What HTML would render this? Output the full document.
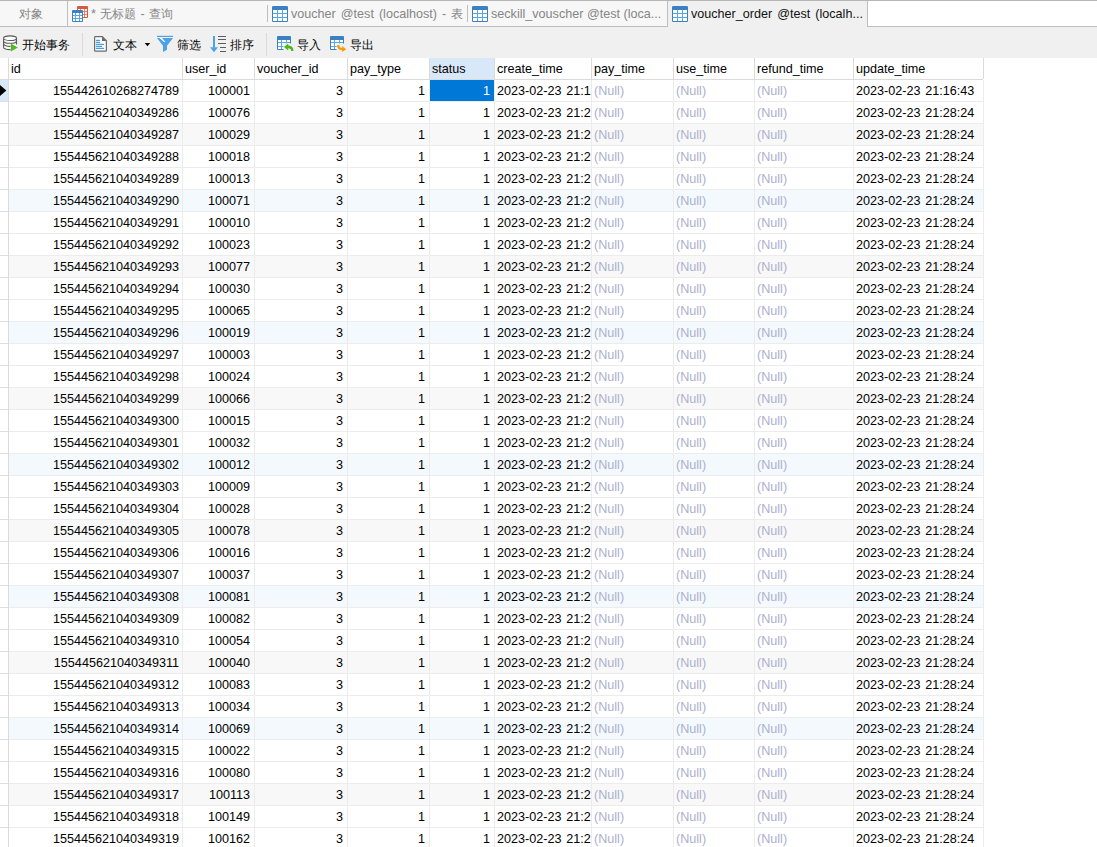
<!DOCTYPE html><html><head><meta charset="utf-8"><title>voucher_order</title><style>
html,body{margin:0;padding:0}
body{width:1097px;height:847px;overflow:hidden;position:relative;background:#fff;font-family:"Liberation Sans",sans-serif;font-size:12.6px;color:#000}
div,span,svg{position:absolute;box-sizing:border-box}
.t{white-space:nowrap;overflow:hidden;line-height:21px;height:21px;padding-top:1px}
.r{text-align:right}
.n{color:#abb0cd}
.tab{top:1px;height:25px;background:#f7f7f7;line-height:25px;white-space:nowrap;overflow:hidden}
.tt{color:#858585}
.tb{color:#111}
.tbi{top:34px;line-height:22px;white-space:nowrap;color:#000;font-size:12px}
</style></head><body>
<div style="left:0;top:0;width:1097px;height:1px;background:#b6b6b6"></div>
<div style="left:0;top:1px;width:667px;height:25px;background:#f7f7f7"></div>
<div style="left:0;top:26px;width:667px;height:1px;background:#bdbdbd"></div>
<div style="left:67px;top:1px;width:1px;height:26px;background:#bdbdbd"></div>
<div style="left:267px;top:5px;width:1px;height:17px;background:#bdbdbd"></div>
<div style="left:467px;top:5px;width:1px;height:17px;background:#bdbdbd"></div>
<div style="left:667px;top:1px;width:1px;height:26px;background:#bdbdbd"></div>
<div style="left:668px;top:1px;width:199px;height:26px;background:#f0f0f0"></div>
<div style="left:867px;top:1px;width:1px;height:26px;background:#bdbdbd"></div>
<div style="left:868px;top:1px;width:229px;height:25px;background:#fff"></div>
<div style="left:867px;top:26px;width:230px;height:1px;background:#bdbdbd"></div>
<div class="tab tt" style="left:19px;top:2px;width:45px;background:none;font-size:12px">对象</div>
<svg style="left:77px;top:6px" width="11" height="12" viewBox="0 0 11 12" shape-rendering="crispEdges"><rect x="0" y="0" width="11" height="12" rx="1" fill="#d65a3c" shape-rendering="auto"/><rect x="1" y="3" width="9" height="8" fill="#ef7b5c"/><rect x="1" y="3" width="2" height="2" fill="#fff"/><rect x="4" y="3" width="3" height="2" fill="#fff"/><rect x="8" y="3" width="2" height="2" fill="#fff"/><rect x="1" y="6" width="2" height="2" fill="#fff"/><rect x="4" y="6" width="3" height="2" fill="#fff"/><rect x="8" y="6" width="2" height="2" fill="#fff"/><rect x="1" y="9" width="2" height="2" fill="#fff"/><rect x="4" y="9" width="3" height="2" fill="#fff"/><rect x="8" y="9" width="2" height="2" fill="#fff"/></svg>
<svg style="left:72px;top:10px" width="11" height="12" viewBox="0 0 11 12" shape-rendering="crispEdges"><rect x="0" y="0" width="11" height="12" rx="1" fill="#3b80c2" shape-rendering="auto"/><rect x="1" y="3" width="9" height="8" fill="#5aa7e3"/><rect x="1" y="3" width="2" height="2" fill="#fff"/><rect x="4" y="3" width="3" height="2" fill="#fff"/><rect x="8" y="3" width="2" height="2" fill="#fff"/><rect x="1" y="6" width="2" height="2" fill="#fff"/><rect x="4" y="6" width="3" height="2" fill="#fff"/><rect x="8" y="6" width="2" height="2" fill="#fff"/><rect x="1" y="9" width="2" height="2" fill="#fff"/><rect x="4" y="9" width="3" height="2" fill="#fff"/><rect x="8" y="9" width="2" height="2" fill="#fff"/></svg>
<div class="tab tt" style="left:91px;top:2px;width:174px;background:none;word-spacing:0.8px">* <span style="position:static;font-size:12px">无标题</span> - <span style="position:static;font-size:12px">查询</span></div>
<svg style="left:272px;top:6px" width="16" height="16" viewBox="0 0 16 16" shape-rendering="crispEdges"><rect x="0" y="0" width="16" height="16" rx="1.2" fill="#3b80c2" shape-rendering="auto"/><rect x="1" y="4" width="14" height="11" fill="#5aa7e3"/><rect x="1" y="4" width="4" height="3" fill="#fff"/><rect x="6" y="4" width="4" height="3" fill="#fff"/><rect x="11" y="4" width="4" height="3" fill="#fff"/><rect x="1" y="8" width="4" height="3" fill="#fff"/><rect x="6" y="8" width="4" height="3" fill="#fff"/><rect x="11" y="8" width="4" height="3" fill="#fff"/><rect x="1" y="12" width="4" height="3" fill="#fff"/><rect x="6" y="12" width="4" height="3" fill="#fff"/><rect x="11" y="12" width="4" height="3" fill="#fff"/></svg>
<div class="tab tt" style="left:291px;top:2px;width:175px;background:none;word-spacing:1.5px">voucher @test (localhost) - <span style="position:static;font-size:12px">表</span></div>
<svg style="left:472px;top:6px" width="16" height="16" viewBox="0 0 16 16" shape-rendering="crispEdges"><rect x="0" y="0" width="16" height="16" rx="1.2" fill="#3b80c2" shape-rendering="auto"/><rect x="1" y="4" width="14" height="11" fill="#5aa7e3"/><rect x="1" y="4" width="4" height="3" fill="#fff"/><rect x="6" y="4" width="4" height="3" fill="#fff"/><rect x="11" y="4" width="4" height="3" fill="#fff"/><rect x="1" y="8" width="4" height="3" fill="#fff"/><rect x="6" y="8" width="4" height="3" fill="#fff"/><rect x="11" y="8" width="4" height="3" fill="#fff"/><rect x="1" y="12" width="4" height="3" fill="#fff"/><rect x="6" y="12" width="4" height="3" fill="#fff"/><rect x="11" y="12" width="4" height="3" fill="#fff"/></svg>
<div class="tab tt" style="left:491px;top:2px;width:175px;background:none">seckill_vouscher @test (loca...</div>
<svg style="left:672px;top:6px" width="16" height="16" viewBox="0 0 16 16" shape-rendering="crispEdges"><rect x="0" y="0" width="16" height="16" rx="1.2" fill="#3b80c2" shape-rendering="auto"/><rect x="1" y="4" width="14" height="11" fill="#5aa7e3"/><rect x="1" y="4" width="4" height="3" fill="#fff"/><rect x="6" y="4" width="4" height="3" fill="#fff"/><rect x="11" y="4" width="4" height="3" fill="#fff"/><rect x="1" y="8" width="4" height="3" fill="#fff"/><rect x="6" y="8" width="4" height="3" fill="#fff"/><rect x="11" y="8" width="4" height="3" fill="#fff"/><rect x="1" y="12" width="4" height="3" fill="#fff"/><rect x="6" y="12" width="4" height="3" fill="#fff"/><rect x="11" y="12" width="4" height="3" fill="#fff"/></svg>
<div class="tab tb" style="left:691px;top:2px;width:175px;background:none;word-spacing:1.5px">voucher_order @test (localh...</div>
<div style="left:0;top:27px;width:1097px;height:31px;background:#f0f0f0"></div>
<svg style="left:0;top:0" width="400" height="58" viewBox="0 0 400 58"><path d="M3.6 38.2 V47.4 A6.45 2.2 0 0 0 16.5 47.4 V38.2 Z" fill="#fff"/><g fill="none" stroke="#5a5a5a" stroke-width="1.1"><path d="M3.6 38.2 V47.4 A6.45 2.2 0 0 0 10.5 49.6 M16.5 38.2 V44.5" /><ellipse cx="10.05" cy="38.2" rx="6.45" ry="2.3" fill="#fff"/><path d="M3.6 41 A6.45 2.3 0 0 0 16.5 41 M3.6 44.1 A6.45 2.3 0 0 0 10.5 46.4"/></g><path d="M4.2 40.8 A6 2 0 0 0 16 40.8 V44 L11 44 V49.5 L4.2 47 Z" fill="#fff" fill-opacity="0"/><path d="M10.8 43.4 L17.8 47.5 L10.8 51.6 Z" fill="#50b91e"/><path d="M94.6 37.2 Q94.6 36.6 95.2 36.6 H102.3 L106.4 40.7 V50.6 Q106.4 51.2 105.8 51.2 H95.2 Q94.6 51.2 94.6 50.6 Z" fill="#fff" stroke="#6b6b6b" stroke-width="1.2"/><path d="M102 36.4 V41 H106.6 Z" fill="#6b6b6b"/><g stroke="#4a9de0" stroke-width="1.1" stroke-linecap="round"><path d="M96.4 40.4H99.6M96.4 42.4H99.6M96.4 44.4H103.6M96.4 46.4H101.6M96.4 48.4H103.6"/></g><path d="M144.7 43 H150.2 L147.45 46.2 Z" fill="#000"/><rect x="157" y="35.8" width="16" height="1.2" fill="#4ea1e3"/><path d="M157 38 H173 L167 45.8 V49.7 L163 52 V45.8 Z" fill="#4ea1e3"/><path d="M159.4 38 H162 L165.4 42 H164 Z" fill="#fff"/><rect x="213" y="36" width="2" height="11.5" fill="#4ea1e3"/><path d="M210 47.3 H218 L214 52.2 Z" fill="#4ea1e3"/><g fill="#5c5c5c"><rect x="218" y="36" width="8" height="1"/><rect x="218" y="39" width="8" height="1"/><rect x="218" y="43" width="8" height="1"/><rect x="220" y="47" width="6" height="1"/><rect x="220" y="51" width="6" height="1"/></g></svg>
<div class="tbi" style="left:22px">开始事务</div>
<div style="left:82px;top:33px;width:1px;height:23px;background:#dadada"></div>
<div class="tbi" style="left:113px">文本</div>
<div class="tbi" style="left:177px">筛选</div>
<div class="tbi" style="left:230px">排序</div>
<div style="left:266px;top:33px;width:1px;height:23px;background:#dadada"></div>
<svg style="left:277px;top:36px" width="14" height="14" viewBox="0 0 14 14" shape-rendering="crispEdges"><rect x="0" y="0" width="14" height="14" rx="1" fill="#3b80c2" shape-rendering="auto"/><rect x="1" y="4" width="12" height="9" fill="#5aa7e3"/><rect x="1" y="4" width="3" height="2" fill="#fff"/><rect x="5" y="4" width="4" height="2" fill="#fff"/><rect x="10" y="4" width="3" height="2" fill="#fff"/><rect x="1" y="7" width="3" height="3" fill="#fff"/><rect x="5" y="7" width="4" height="3" fill="#fff"/><rect x="10" y="7" width="3" height="3" fill="#fff"/><rect x="1" y="11" width="3" height="2" fill="#fff"/><rect x="5" y="11" width="4" height="2" fill="#fff"/><rect x="10" y="11" width="3" height="2" fill="#fff"/></svg>
<svg style="left:330px;top:36px" width="14" height="14" viewBox="0 0 14 14" shape-rendering="crispEdges"><rect x="0" y="0" width="14" height="14" rx="1" fill="#3b80c2" shape-rendering="auto"/><rect x="1" y="4" width="12" height="9" fill="#5aa7e3"/><rect x="1" y="4" width="3" height="2" fill="#fff"/><rect x="5" y="4" width="4" height="2" fill="#fff"/><rect x="10" y="4" width="3" height="2" fill="#fff"/><rect x="1" y="7" width="3" height="3" fill="#fff"/><rect x="5" y="7" width="4" height="3" fill="#fff"/><rect x="10" y="7" width="3" height="3" fill="#fff"/><rect x="1" y="11" width="3" height="2" fill="#fff"/><rect x="5" y="11" width="4" height="2" fill="#fff"/><rect x="10" y="11" width="3" height="2" fill="#fff"/></svg>
<svg style="left:270px;top:30px" width="90" height="26" viewBox="270 30 90 26"><path d="M283.5 43.5 H292 V51.5 H283.5 Z M336.5 43.5 H347 V52.5 H336.5 Z" fill="#f0f0f0"/><path d="M284 47 L288.2 43.6 V45.6 C291.5 45.6 293.6 47.8 293.4 51 L291.2 51 C291.2 49.2 290 48.2 288.2 48.2 V50.4 Z" fill="#4cb81c"/><path d="M337 45 H339.3 C339.3 47 340.5 48 342.2 48 V46 L346.2 49.2 L342.2 52 V50.2 C339 50.2 337 48.3 337 45 Z" fill="#ff9a00"/></svg>
<div class="tbi" style="left:297px">导入</div>
<div class="tbi" style="left:350px">导出</div>
<div style="left:9px;top:124px;width:974px;height:21px;background:#f8f8f8"></div>
<div style="left:9px;top:190px;width:974px;height:21px;background:#f4f9fe"></div>
<div style="left:9px;top:256px;width:974px;height:21px;background:#f8f8f8"></div>
<div style="left:9px;top:322px;width:974px;height:21px;background:#f4f9fe"></div>
<div style="left:9px;top:388px;width:974px;height:21px;background:#f8f8f8"></div>
<div style="left:9px;top:454px;width:974px;height:21px;background:#f4f9fe"></div>
<div style="left:9px;top:520px;width:974px;height:21px;background:#f8f8f8"></div>
<div style="left:9px;top:586px;width:974px;height:21px;background:#f4f9fe"></div>
<div style="left:9px;top:652px;width:974px;height:21px;background:#f8f8f8"></div>
<div style="left:9px;top:718px;width:974px;height:21px;background:#f4f9fe"></div>
<div style="left:9px;top:784px;width:974px;height:21px;background:#f8f8f8"></div>
<div style="left:430px;top:58px;width:64px;height:21px;background:#d9e8f8"></div>
<div style="left:0;top:80px;width:8px;height:21px;background:#d9e8f8"></div>
<div style="left:430px;top:80px;width:64px;height:21px;background:#0078d7"></div>
<div style="left:0;top:79px;width:983px;height:1px;background:#dadada"></div>
<div style="left:0;top:101px;width:8px;height:1px;background:#dedede"></div>
<div style="left:9px;top:101px;width:974px;height:1px;background:#ececec"></div>
<div style="left:0;top:123px;width:8px;height:1px;background:#dedede"></div>
<div style="left:9px;top:123px;width:974px;height:1px;background:#ececec"></div>
<div style="left:0;top:145px;width:8px;height:1px;background:#dedede"></div>
<div style="left:9px;top:145px;width:974px;height:1px;background:#ececec"></div>
<div style="left:0;top:167px;width:8px;height:1px;background:#dedede"></div>
<div style="left:9px;top:167px;width:974px;height:1px;background:#ececec"></div>
<div style="left:0;top:189px;width:8px;height:1px;background:#dedede"></div>
<div style="left:9px;top:189px;width:974px;height:1px;background:#ececec"></div>
<div style="left:0;top:211px;width:8px;height:1px;background:#dedede"></div>
<div style="left:9px;top:211px;width:974px;height:1px;background:#ececec"></div>
<div style="left:0;top:233px;width:8px;height:1px;background:#dedede"></div>
<div style="left:9px;top:233px;width:974px;height:1px;background:#ececec"></div>
<div style="left:0;top:255px;width:8px;height:1px;background:#dedede"></div>
<div style="left:9px;top:255px;width:974px;height:1px;background:#ececec"></div>
<div style="left:0;top:277px;width:8px;height:1px;background:#dedede"></div>
<div style="left:9px;top:277px;width:974px;height:1px;background:#ececec"></div>
<div style="left:0;top:299px;width:8px;height:1px;background:#dedede"></div>
<div style="left:9px;top:299px;width:974px;height:1px;background:#ececec"></div>
<div style="left:0;top:321px;width:8px;height:1px;background:#dedede"></div>
<div style="left:9px;top:321px;width:974px;height:1px;background:#ececec"></div>
<div style="left:0;top:343px;width:8px;height:1px;background:#dedede"></div>
<div style="left:9px;top:343px;width:974px;height:1px;background:#ececec"></div>
<div style="left:0;top:365px;width:8px;height:1px;background:#dedede"></div>
<div style="left:9px;top:365px;width:974px;height:1px;background:#ececec"></div>
<div style="left:0;top:387px;width:8px;height:1px;background:#dedede"></div>
<div style="left:9px;top:387px;width:974px;height:1px;background:#ececec"></div>
<div style="left:0;top:409px;width:8px;height:1px;background:#dedede"></div>
<div style="left:9px;top:409px;width:974px;height:1px;background:#ececec"></div>
<div style="left:0;top:431px;width:8px;height:1px;background:#dedede"></div>
<div style="left:9px;top:431px;width:974px;height:1px;background:#ececec"></div>
<div style="left:0;top:453px;width:8px;height:1px;background:#dedede"></div>
<div style="left:9px;top:453px;width:974px;height:1px;background:#ececec"></div>
<div style="left:0;top:475px;width:8px;height:1px;background:#dedede"></div>
<div style="left:9px;top:475px;width:974px;height:1px;background:#ececec"></div>
<div style="left:0;top:497px;width:8px;height:1px;background:#dedede"></div>
<div style="left:9px;top:497px;width:974px;height:1px;background:#ececec"></div>
<div style="left:0;top:519px;width:8px;height:1px;background:#dedede"></div>
<div style="left:9px;top:519px;width:974px;height:1px;background:#ececec"></div>
<div style="left:0;top:541px;width:8px;height:1px;background:#dedede"></div>
<div style="left:9px;top:541px;width:974px;height:1px;background:#ececec"></div>
<div style="left:0;top:563px;width:8px;height:1px;background:#dedede"></div>
<div style="left:9px;top:563px;width:974px;height:1px;background:#ececec"></div>
<div style="left:0;top:585px;width:8px;height:1px;background:#dedede"></div>
<div style="left:9px;top:585px;width:974px;height:1px;background:#ececec"></div>
<div style="left:0;top:607px;width:8px;height:1px;background:#dedede"></div>
<div style="left:9px;top:607px;width:974px;height:1px;background:#ececec"></div>
<div style="left:0;top:629px;width:8px;height:1px;background:#dedede"></div>
<div style="left:9px;top:629px;width:974px;height:1px;background:#ececec"></div>
<div style="left:0;top:651px;width:8px;height:1px;background:#dedede"></div>
<div style="left:9px;top:651px;width:974px;height:1px;background:#ececec"></div>
<div style="left:0;top:673px;width:8px;height:1px;background:#dedede"></div>
<div style="left:9px;top:673px;width:974px;height:1px;background:#ececec"></div>
<div style="left:0;top:695px;width:8px;height:1px;background:#dedede"></div>
<div style="left:9px;top:695px;width:974px;height:1px;background:#ececec"></div>
<div style="left:0;top:717px;width:8px;height:1px;background:#dedede"></div>
<div style="left:9px;top:717px;width:974px;height:1px;background:#ececec"></div>
<div style="left:0;top:739px;width:8px;height:1px;background:#dedede"></div>
<div style="left:9px;top:739px;width:974px;height:1px;background:#ececec"></div>
<div style="left:0;top:761px;width:8px;height:1px;background:#dedede"></div>
<div style="left:9px;top:761px;width:974px;height:1px;background:#ececec"></div>
<div style="left:0;top:783px;width:8px;height:1px;background:#dedede"></div>
<div style="left:9px;top:783px;width:974px;height:1px;background:#ececec"></div>
<div style="left:0;top:805px;width:8px;height:1px;background:#dedede"></div>
<div style="left:9px;top:805px;width:974px;height:1px;background:#ececec"></div>
<div style="left:0;top:827px;width:8px;height:1px;background:#dedede"></div>
<div style="left:9px;top:827px;width:974px;height:1px;background:#ececec"></div>
<div style="left:0;top:849px;width:8px;height:1px;background:#dedede"></div>
<div style="left:9px;top:849px;width:974px;height:1px;background:#ececec"></div>
<div style="left:8px;top:58px;width:1px;height:21px;background:#dadada"></div>
<div style="left:8px;top:80px;width:1px;height:767px;background:#dadada"></div>
<div style="left:182px;top:58px;width:1px;height:21px;background:#dadada"></div>
<div style="left:182px;top:80px;width:1px;height:767px;background:#ececec"></div>
<div style="left:254px;top:58px;width:1px;height:21px;background:#dadada"></div>
<div style="left:254px;top:80px;width:1px;height:767px;background:#ececec"></div>
<div style="left:347px;top:58px;width:1px;height:21px;background:#dadada"></div>
<div style="left:347px;top:80px;width:1px;height:767px;background:#ececec"></div>
<div style="left:429px;top:58px;width:1px;height:21px;background:#dadada"></div>
<div style="left:429px;top:80px;width:1px;height:767px;background:#ececec"></div>
<div style="left:494px;top:58px;width:1px;height:21px;background:#dadada"></div>
<div style="left:494px;top:80px;width:1px;height:767px;background:#ececec"></div>
<div style="left:591px;top:58px;width:1px;height:21px;background:#dadada"></div>
<div style="left:591px;top:80px;width:1px;height:767px;background:#ececec"></div>
<div style="left:673px;top:58px;width:1px;height:21px;background:#dadada"></div>
<div style="left:673px;top:80px;width:1px;height:767px;background:#ececec"></div>
<div style="left:754px;top:58px;width:1px;height:21px;background:#dadada"></div>
<div style="left:754px;top:80px;width:1px;height:767px;background:#ececec"></div>
<div style="left:853px;top:58px;width:1px;height:21px;background:#dadada"></div>
<div style="left:853px;top:80px;width:1px;height:767px;background:#ececec"></div>
<div style="left:983px;top:58px;width:1px;height:21px;background:#dadada"></div>
<div style="left:983px;top:80px;width:1px;height:767px;background:#ececec"></div>
<svg style="left:0;top:83px" width="8" height="15" viewBox="0 0 8 15"><path d="M-1 1 L6.3 7.5 L-1 14 Z" fill="#000"/></svg>
<div class="t" style="left:9px;top:58px;width:173px;padding-left:2px">id</div>
<div class="t" style="left:183px;top:58px;width:71px;padding-left:2px">user_id</div>
<div class="t" style="left:255px;top:58px;width:92px;padding-left:2px">voucher_id</div>
<div class="t" style="left:348px;top:58px;width:81px;padding-left:2px">pay_type</div>
<div class="t" style="left:430px;top:58px;width:64px;padding-left:2px">status</div>
<div class="t" style="left:495px;top:58px;width:96px;padding-left:2px">create_time</div>
<div class="t" style="left:592px;top:58px;width:81px;padding-left:2px">pay_time</div>
<div class="t" style="left:674px;top:58px;width:80px;padding-left:2px">use_time</div>
<div class="t" style="left:755px;top:58px;width:98px;padding-left:2px">refund_time</div>
<div class="t" style="left:854px;top:58px;width:129px;padding-left:2px">update_time</div>
<div class="t r" style="left:9px;top:80px;width:173px;padding-right:3px;">155442610268274789</div>
<div class="t r" style="left:183px;top:80px;width:71px;padding-right:4px;">100001</div>
<div class="t r" style="left:255px;top:80px;width:92px;padding-right:4px;">3</div>
<div class="t r" style="left:348px;top:80px;width:81px;padding-right:4px;">1</div>
<div class="t r" style="left:430px;top:80px;width:64px;padding-right:4px;color:#fff;">1</div>
<div class="t" style="left:495px;top:80px;width:96px;padding-left:2px;word-spacing:1.3px;">2023-02-23 21:1</div>
<div class="t n" style="left:592px;top:80px;width:81px;padding-left:2px;word-spacing:1.3px;">(Null)</div>
<div class="t n" style="left:674px;top:80px;width:80px;padding-left:2px;word-spacing:1.3px;">(Null)</div>
<div class="t n" style="left:755px;top:80px;width:98px;padding-left:2px;word-spacing:1.3px;">(Null)</div>
<div class="t" style="left:854px;top:80px;width:129px;padding-left:2px;word-spacing:1.3px;">2023-02-23 21:16:43</div>
<div class="t r" style="left:9px;top:102px;width:173px;padding-right:3px;">155445621040349286</div>
<div class="t r" style="left:183px;top:102px;width:71px;padding-right:4px;">100076</div>
<div class="t r" style="left:255px;top:102px;width:92px;padding-right:4px;">3</div>
<div class="t r" style="left:348px;top:102px;width:81px;padding-right:4px;">1</div>
<div class="t r" style="left:430px;top:102px;width:64px;padding-right:4px;">1</div>
<div class="t" style="left:495px;top:102px;width:96px;padding-left:2px;word-spacing:1.3px;">2023-02-23 21:2</div>
<div class="t n" style="left:592px;top:102px;width:81px;padding-left:2px;word-spacing:1.3px;">(Null)</div>
<div class="t n" style="left:674px;top:102px;width:80px;padding-left:2px;word-spacing:1.3px;">(Null)</div>
<div class="t n" style="left:755px;top:102px;width:98px;padding-left:2px;word-spacing:1.3px;">(Null)</div>
<div class="t" style="left:854px;top:102px;width:129px;padding-left:2px;word-spacing:1.3px;">2023-02-23 21:28:24</div>
<div class="t r" style="left:9px;top:124px;width:173px;padding-right:3px;">155445621040349287</div>
<div class="t r" style="left:183px;top:124px;width:71px;padding-right:4px;">100029</div>
<div class="t r" style="left:255px;top:124px;width:92px;padding-right:4px;">3</div>
<div class="t r" style="left:348px;top:124px;width:81px;padding-right:4px;">1</div>
<div class="t r" style="left:430px;top:124px;width:64px;padding-right:4px;">1</div>
<div class="t" style="left:495px;top:124px;width:96px;padding-left:2px;word-spacing:1.3px;">2023-02-23 21:2</div>
<div class="t n" style="left:592px;top:124px;width:81px;padding-left:2px;word-spacing:1.3px;">(Null)</div>
<div class="t n" style="left:674px;top:124px;width:80px;padding-left:2px;word-spacing:1.3px;">(Null)</div>
<div class="t n" style="left:755px;top:124px;width:98px;padding-left:2px;word-spacing:1.3px;">(Null)</div>
<div class="t" style="left:854px;top:124px;width:129px;padding-left:2px;word-spacing:1.3px;">2023-02-23 21:28:24</div>
<div class="t r" style="left:9px;top:146px;width:173px;padding-right:3px;">155445621040349288</div>
<div class="t r" style="left:183px;top:146px;width:71px;padding-right:4px;">100018</div>
<div class="t r" style="left:255px;top:146px;width:92px;padding-right:4px;">3</div>
<div class="t r" style="left:348px;top:146px;width:81px;padding-right:4px;">1</div>
<div class="t r" style="left:430px;top:146px;width:64px;padding-right:4px;">1</div>
<div class="t" style="left:495px;top:146px;width:96px;padding-left:2px;word-spacing:1.3px;">2023-02-23 21:2</div>
<div class="t n" style="left:592px;top:146px;width:81px;padding-left:2px;word-spacing:1.3px;">(Null)</div>
<div class="t n" style="left:674px;top:146px;width:80px;padding-left:2px;word-spacing:1.3px;">(Null)</div>
<div class="t n" style="left:755px;top:146px;width:98px;padding-left:2px;word-spacing:1.3px;">(Null)</div>
<div class="t" style="left:854px;top:146px;width:129px;padding-left:2px;word-spacing:1.3px;">2023-02-23 21:28:24</div>
<div class="t r" style="left:9px;top:168px;width:173px;padding-right:3px;">155445621040349289</div>
<div class="t r" style="left:183px;top:168px;width:71px;padding-right:4px;">100013</div>
<div class="t r" style="left:255px;top:168px;width:92px;padding-right:4px;">3</div>
<div class="t r" style="left:348px;top:168px;width:81px;padding-right:4px;">1</div>
<div class="t r" style="left:430px;top:168px;width:64px;padding-right:4px;">1</div>
<div class="t" style="left:495px;top:168px;width:96px;padding-left:2px;word-spacing:1.3px;">2023-02-23 21:2</div>
<div class="t n" style="left:592px;top:168px;width:81px;padding-left:2px;word-spacing:1.3px;">(Null)</div>
<div class="t n" style="left:674px;top:168px;width:80px;padding-left:2px;word-spacing:1.3px;">(Null)</div>
<div class="t n" style="left:755px;top:168px;width:98px;padding-left:2px;word-spacing:1.3px;">(Null)</div>
<div class="t" style="left:854px;top:168px;width:129px;padding-left:2px;word-spacing:1.3px;">2023-02-23 21:28:24</div>
<div class="t r" style="left:9px;top:190px;width:173px;padding-right:3px;">155445621040349290</div>
<div class="t r" style="left:183px;top:190px;width:71px;padding-right:4px;">100071</div>
<div class="t r" style="left:255px;top:190px;width:92px;padding-right:4px;">3</div>
<div class="t r" style="left:348px;top:190px;width:81px;padding-right:4px;">1</div>
<div class="t r" style="left:430px;top:190px;width:64px;padding-right:4px;">1</div>
<div class="t" style="left:495px;top:190px;width:96px;padding-left:2px;word-spacing:1.3px;">2023-02-23 21:2</div>
<div class="t n" style="left:592px;top:190px;width:81px;padding-left:2px;word-spacing:1.3px;">(Null)</div>
<div class="t n" style="left:674px;top:190px;width:80px;padding-left:2px;word-spacing:1.3px;">(Null)</div>
<div class="t n" style="left:755px;top:190px;width:98px;padding-left:2px;word-spacing:1.3px;">(Null)</div>
<div class="t" style="left:854px;top:190px;width:129px;padding-left:2px;word-spacing:1.3px;">2023-02-23 21:28:24</div>
<div class="t r" style="left:9px;top:212px;width:173px;padding-right:3px;">155445621040349291</div>
<div class="t r" style="left:183px;top:212px;width:71px;padding-right:4px;">100010</div>
<div class="t r" style="left:255px;top:212px;width:92px;padding-right:4px;">3</div>
<div class="t r" style="left:348px;top:212px;width:81px;padding-right:4px;">1</div>
<div class="t r" style="left:430px;top:212px;width:64px;padding-right:4px;">1</div>
<div class="t" style="left:495px;top:212px;width:96px;padding-left:2px;word-spacing:1.3px;">2023-02-23 21:2</div>
<div class="t n" style="left:592px;top:212px;width:81px;padding-left:2px;word-spacing:1.3px;">(Null)</div>
<div class="t n" style="left:674px;top:212px;width:80px;padding-left:2px;word-spacing:1.3px;">(Null)</div>
<div class="t n" style="left:755px;top:212px;width:98px;padding-left:2px;word-spacing:1.3px;">(Null)</div>
<div class="t" style="left:854px;top:212px;width:129px;padding-left:2px;word-spacing:1.3px;">2023-02-23 21:28:24</div>
<div class="t r" style="left:9px;top:234px;width:173px;padding-right:3px;">155445621040349292</div>
<div class="t r" style="left:183px;top:234px;width:71px;padding-right:4px;">100023</div>
<div class="t r" style="left:255px;top:234px;width:92px;padding-right:4px;">3</div>
<div class="t r" style="left:348px;top:234px;width:81px;padding-right:4px;">1</div>
<div class="t r" style="left:430px;top:234px;width:64px;padding-right:4px;">1</div>
<div class="t" style="left:495px;top:234px;width:96px;padding-left:2px;word-spacing:1.3px;">2023-02-23 21:2</div>
<div class="t n" style="left:592px;top:234px;width:81px;padding-left:2px;word-spacing:1.3px;">(Null)</div>
<div class="t n" style="left:674px;top:234px;width:80px;padding-left:2px;word-spacing:1.3px;">(Null)</div>
<div class="t n" style="left:755px;top:234px;width:98px;padding-left:2px;word-spacing:1.3px;">(Null)</div>
<div class="t" style="left:854px;top:234px;width:129px;padding-left:2px;word-spacing:1.3px;">2023-02-23 21:28:24</div>
<div class="t r" style="left:9px;top:256px;width:173px;padding-right:3px;">155445621040349293</div>
<div class="t r" style="left:183px;top:256px;width:71px;padding-right:4px;">100077</div>
<div class="t r" style="left:255px;top:256px;width:92px;padding-right:4px;">3</div>
<div class="t r" style="left:348px;top:256px;width:81px;padding-right:4px;">1</div>
<div class="t r" style="left:430px;top:256px;width:64px;padding-right:4px;">1</div>
<div class="t" style="left:495px;top:256px;width:96px;padding-left:2px;word-spacing:1.3px;">2023-02-23 21:2</div>
<div class="t n" style="left:592px;top:256px;width:81px;padding-left:2px;word-spacing:1.3px;">(Null)</div>
<div class="t n" style="left:674px;top:256px;width:80px;padding-left:2px;word-spacing:1.3px;">(Null)</div>
<div class="t n" style="left:755px;top:256px;width:98px;padding-left:2px;word-spacing:1.3px;">(Null)</div>
<div class="t" style="left:854px;top:256px;width:129px;padding-left:2px;word-spacing:1.3px;">2023-02-23 21:28:24</div>
<div class="t r" style="left:9px;top:278px;width:173px;padding-right:3px;">155445621040349294</div>
<div class="t r" style="left:183px;top:278px;width:71px;padding-right:4px;">100030</div>
<div class="t r" style="left:255px;top:278px;width:92px;padding-right:4px;">3</div>
<div class="t r" style="left:348px;top:278px;width:81px;padding-right:4px;">1</div>
<div class="t r" style="left:430px;top:278px;width:64px;padding-right:4px;">1</div>
<div class="t" style="left:495px;top:278px;width:96px;padding-left:2px;word-spacing:1.3px;">2023-02-23 21:2</div>
<div class="t n" style="left:592px;top:278px;width:81px;padding-left:2px;word-spacing:1.3px;">(Null)</div>
<div class="t n" style="left:674px;top:278px;width:80px;padding-left:2px;word-spacing:1.3px;">(Null)</div>
<div class="t n" style="left:755px;top:278px;width:98px;padding-left:2px;word-spacing:1.3px;">(Null)</div>
<div class="t" style="left:854px;top:278px;width:129px;padding-left:2px;word-spacing:1.3px;">2023-02-23 21:28:24</div>
<div class="t r" style="left:9px;top:300px;width:173px;padding-right:3px;">155445621040349295</div>
<div class="t r" style="left:183px;top:300px;width:71px;padding-right:4px;">100065</div>
<div class="t r" style="left:255px;top:300px;width:92px;padding-right:4px;">3</div>
<div class="t r" style="left:348px;top:300px;width:81px;padding-right:4px;">1</div>
<div class="t r" style="left:430px;top:300px;width:64px;padding-right:4px;">1</div>
<div class="t" style="left:495px;top:300px;width:96px;padding-left:2px;word-spacing:1.3px;">2023-02-23 21:2</div>
<div class="t n" style="left:592px;top:300px;width:81px;padding-left:2px;word-spacing:1.3px;">(Null)</div>
<div class="t n" style="left:674px;top:300px;width:80px;padding-left:2px;word-spacing:1.3px;">(Null)</div>
<div class="t n" style="left:755px;top:300px;width:98px;padding-left:2px;word-spacing:1.3px;">(Null)</div>
<div class="t" style="left:854px;top:300px;width:129px;padding-left:2px;word-spacing:1.3px;">2023-02-23 21:28:24</div>
<div class="t r" style="left:9px;top:322px;width:173px;padding-right:3px;">155445621040349296</div>
<div class="t r" style="left:183px;top:322px;width:71px;padding-right:4px;">100019</div>
<div class="t r" style="left:255px;top:322px;width:92px;padding-right:4px;">3</div>
<div class="t r" style="left:348px;top:322px;width:81px;padding-right:4px;">1</div>
<div class="t r" style="left:430px;top:322px;width:64px;padding-right:4px;">1</div>
<div class="t" style="left:495px;top:322px;width:96px;padding-left:2px;word-spacing:1.3px;">2023-02-23 21:2</div>
<div class="t n" style="left:592px;top:322px;width:81px;padding-left:2px;word-spacing:1.3px;">(Null)</div>
<div class="t n" style="left:674px;top:322px;width:80px;padding-left:2px;word-spacing:1.3px;">(Null)</div>
<div class="t n" style="left:755px;top:322px;width:98px;padding-left:2px;word-spacing:1.3px;">(Null)</div>
<div class="t" style="left:854px;top:322px;width:129px;padding-left:2px;word-spacing:1.3px;">2023-02-23 21:28:24</div>
<div class="t r" style="left:9px;top:344px;width:173px;padding-right:3px;">155445621040349297</div>
<div class="t r" style="left:183px;top:344px;width:71px;padding-right:4px;">100003</div>
<div class="t r" style="left:255px;top:344px;width:92px;padding-right:4px;">3</div>
<div class="t r" style="left:348px;top:344px;width:81px;padding-right:4px;">1</div>
<div class="t r" style="left:430px;top:344px;width:64px;padding-right:4px;">1</div>
<div class="t" style="left:495px;top:344px;width:96px;padding-left:2px;word-spacing:1.3px;">2023-02-23 21:2</div>
<div class="t n" style="left:592px;top:344px;width:81px;padding-left:2px;word-spacing:1.3px;">(Null)</div>
<div class="t n" style="left:674px;top:344px;width:80px;padding-left:2px;word-spacing:1.3px;">(Null)</div>
<div class="t n" style="left:755px;top:344px;width:98px;padding-left:2px;word-spacing:1.3px;">(Null)</div>
<div class="t" style="left:854px;top:344px;width:129px;padding-left:2px;word-spacing:1.3px;">2023-02-23 21:28:24</div>
<div class="t r" style="left:9px;top:366px;width:173px;padding-right:3px;">155445621040349298</div>
<div class="t r" style="left:183px;top:366px;width:71px;padding-right:4px;">100024</div>
<div class="t r" style="left:255px;top:366px;width:92px;padding-right:4px;">3</div>
<div class="t r" style="left:348px;top:366px;width:81px;padding-right:4px;">1</div>
<div class="t r" style="left:430px;top:366px;width:64px;padding-right:4px;">1</div>
<div class="t" style="left:495px;top:366px;width:96px;padding-left:2px;word-spacing:1.3px;">2023-02-23 21:2</div>
<div class="t n" style="left:592px;top:366px;width:81px;padding-left:2px;word-spacing:1.3px;">(Null)</div>
<div class="t n" style="left:674px;top:366px;width:80px;padding-left:2px;word-spacing:1.3px;">(Null)</div>
<div class="t n" style="left:755px;top:366px;width:98px;padding-left:2px;word-spacing:1.3px;">(Null)</div>
<div class="t" style="left:854px;top:366px;width:129px;padding-left:2px;word-spacing:1.3px;">2023-02-23 21:28:24</div>
<div class="t r" style="left:9px;top:388px;width:173px;padding-right:3px;">155445621040349299</div>
<div class="t r" style="left:183px;top:388px;width:71px;padding-right:4px;">100066</div>
<div class="t r" style="left:255px;top:388px;width:92px;padding-right:4px;">3</div>
<div class="t r" style="left:348px;top:388px;width:81px;padding-right:4px;">1</div>
<div class="t r" style="left:430px;top:388px;width:64px;padding-right:4px;">1</div>
<div class="t" style="left:495px;top:388px;width:96px;padding-left:2px;word-spacing:1.3px;">2023-02-23 21:2</div>
<div class="t n" style="left:592px;top:388px;width:81px;padding-left:2px;word-spacing:1.3px;">(Null)</div>
<div class="t n" style="left:674px;top:388px;width:80px;padding-left:2px;word-spacing:1.3px;">(Null)</div>
<div class="t n" style="left:755px;top:388px;width:98px;padding-left:2px;word-spacing:1.3px;">(Null)</div>
<div class="t" style="left:854px;top:388px;width:129px;padding-left:2px;word-spacing:1.3px;">2023-02-23 21:28:24</div>
<div class="t r" style="left:9px;top:410px;width:173px;padding-right:3px;">155445621040349300</div>
<div class="t r" style="left:183px;top:410px;width:71px;padding-right:4px;">100015</div>
<div class="t r" style="left:255px;top:410px;width:92px;padding-right:4px;">3</div>
<div class="t r" style="left:348px;top:410px;width:81px;padding-right:4px;">1</div>
<div class="t r" style="left:430px;top:410px;width:64px;padding-right:4px;">1</div>
<div class="t" style="left:495px;top:410px;width:96px;padding-left:2px;word-spacing:1.3px;">2023-02-23 21:2</div>
<div class="t n" style="left:592px;top:410px;width:81px;padding-left:2px;word-spacing:1.3px;">(Null)</div>
<div class="t n" style="left:674px;top:410px;width:80px;padding-left:2px;word-spacing:1.3px;">(Null)</div>
<div class="t n" style="left:755px;top:410px;width:98px;padding-left:2px;word-spacing:1.3px;">(Null)</div>
<div class="t" style="left:854px;top:410px;width:129px;padding-left:2px;word-spacing:1.3px;">2023-02-23 21:28:24</div>
<div class="t r" style="left:9px;top:432px;width:173px;padding-right:3px;">155445621040349301</div>
<div class="t r" style="left:183px;top:432px;width:71px;padding-right:4px;">100032</div>
<div class="t r" style="left:255px;top:432px;width:92px;padding-right:4px;">3</div>
<div class="t r" style="left:348px;top:432px;width:81px;padding-right:4px;">1</div>
<div class="t r" style="left:430px;top:432px;width:64px;padding-right:4px;">1</div>
<div class="t" style="left:495px;top:432px;width:96px;padding-left:2px;word-spacing:1.3px;">2023-02-23 21:2</div>
<div class="t n" style="left:592px;top:432px;width:81px;padding-left:2px;word-spacing:1.3px;">(Null)</div>
<div class="t n" style="left:674px;top:432px;width:80px;padding-left:2px;word-spacing:1.3px;">(Null)</div>
<div class="t n" style="left:755px;top:432px;width:98px;padding-left:2px;word-spacing:1.3px;">(Null)</div>
<div class="t" style="left:854px;top:432px;width:129px;padding-left:2px;word-spacing:1.3px;">2023-02-23 21:28:24</div>
<div class="t r" style="left:9px;top:454px;width:173px;padding-right:3px;">155445621040349302</div>
<div class="t r" style="left:183px;top:454px;width:71px;padding-right:4px;">100012</div>
<div class="t r" style="left:255px;top:454px;width:92px;padding-right:4px;">3</div>
<div class="t r" style="left:348px;top:454px;width:81px;padding-right:4px;">1</div>
<div class="t r" style="left:430px;top:454px;width:64px;padding-right:4px;">1</div>
<div class="t" style="left:495px;top:454px;width:96px;padding-left:2px;word-spacing:1.3px;">2023-02-23 21:2</div>
<div class="t n" style="left:592px;top:454px;width:81px;padding-left:2px;word-spacing:1.3px;">(Null)</div>
<div class="t n" style="left:674px;top:454px;width:80px;padding-left:2px;word-spacing:1.3px;">(Null)</div>
<div class="t n" style="left:755px;top:454px;width:98px;padding-left:2px;word-spacing:1.3px;">(Null)</div>
<div class="t" style="left:854px;top:454px;width:129px;padding-left:2px;word-spacing:1.3px;">2023-02-23 21:28:24</div>
<div class="t r" style="left:9px;top:476px;width:173px;padding-right:3px;">155445621040349303</div>
<div class="t r" style="left:183px;top:476px;width:71px;padding-right:4px;">100009</div>
<div class="t r" style="left:255px;top:476px;width:92px;padding-right:4px;">3</div>
<div class="t r" style="left:348px;top:476px;width:81px;padding-right:4px;">1</div>
<div class="t r" style="left:430px;top:476px;width:64px;padding-right:4px;">1</div>
<div class="t" style="left:495px;top:476px;width:96px;padding-left:2px;word-spacing:1.3px;">2023-02-23 21:2</div>
<div class="t n" style="left:592px;top:476px;width:81px;padding-left:2px;word-spacing:1.3px;">(Null)</div>
<div class="t n" style="left:674px;top:476px;width:80px;padding-left:2px;word-spacing:1.3px;">(Null)</div>
<div class="t n" style="left:755px;top:476px;width:98px;padding-left:2px;word-spacing:1.3px;">(Null)</div>
<div class="t" style="left:854px;top:476px;width:129px;padding-left:2px;word-spacing:1.3px;">2023-02-23 21:28:24</div>
<div class="t r" style="left:9px;top:498px;width:173px;padding-right:3px;">155445621040349304</div>
<div class="t r" style="left:183px;top:498px;width:71px;padding-right:4px;">100028</div>
<div class="t r" style="left:255px;top:498px;width:92px;padding-right:4px;">3</div>
<div class="t r" style="left:348px;top:498px;width:81px;padding-right:4px;">1</div>
<div class="t r" style="left:430px;top:498px;width:64px;padding-right:4px;">1</div>
<div class="t" style="left:495px;top:498px;width:96px;padding-left:2px;word-spacing:1.3px;">2023-02-23 21:2</div>
<div class="t n" style="left:592px;top:498px;width:81px;padding-left:2px;word-spacing:1.3px;">(Null)</div>
<div class="t n" style="left:674px;top:498px;width:80px;padding-left:2px;word-spacing:1.3px;">(Null)</div>
<div class="t n" style="left:755px;top:498px;width:98px;padding-left:2px;word-spacing:1.3px;">(Null)</div>
<div class="t" style="left:854px;top:498px;width:129px;padding-left:2px;word-spacing:1.3px;">2023-02-23 21:28:24</div>
<div class="t r" style="left:9px;top:520px;width:173px;padding-right:3px;">155445621040349305</div>
<div class="t r" style="left:183px;top:520px;width:71px;padding-right:4px;">100078</div>
<div class="t r" style="left:255px;top:520px;width:92px;padding-right:4px;">3</div>
<div class="t r" style="left:348px;top:520px;width:81px;padding-right:4px;">1</div>
<div class="t r" style="left:430px;top:520px;width:64px;padding-right:4px;">1</div>
<div class="t" style="left:495px;top:520px;width:96px;padding-left:2px;word-spacing:1.3px;">2023-02-23 21:2</div>
<div class="t n" style="left:592px;top:520px;width:81px;padding-left:2px;word-spacing:1.3px;">(Null)</div>
<div class="t n" style="left:674px;top:520px;width:80px;padding-left:2px;word-spacing:1.3px;">(Null)</div>
<div class="t n" style="left:755px;top:520px;width:98px;padding-left:2px;word-spacing:1.3px;">(Null)</div>
<div class="t" style="left:854px;top:520px;width:129px;padding-left:2px;word-spacing:1.3px;">2023-02-23 21:28:24</div>
<div class="t r" style="left:9px;top:542px;width:173px;padding-right:3px;">155445621040349306</div>
<div class="t r" style="left:183px;top:542px;width:71px;padding-right:4px;">100016</div>
<div class="t r" style="left:255px;top:542px;width:92px;padding-right:4px;">3</div>
<div class="t r" style="left:348px;top:542px;width:81px;padding-right:4px;">1</div>
<div class="t r" style="left:430px;top:542px;width:64px;padding-right:4px;">1</div>
<div class="t" style="left:495px;top:542px;width:96px;padding-left:2px;word-spacing:1.3px;">2023-02-23 21:2</div>
<div class="t n" style="left:592px;top:542px;width:81px;padding-left:2px;word-spacing:1.3px;">(Null)</div>
<div class="t n" style="left:674px;top:542px;width:80px;padding-left:2px;word-spacing:1.3px;">(Null)</div>
<div class="t n" style="left:755px;top:542px;width:98px;padding-left:2px;word-spacing:1.3px;">(Null)</div>
<div class="t" style="left:854px;top:542px;width:129px;padding-left:2px;word-spacing:1.3px;">2023-02-23 21:28:24</div>
<div class="t r" style="left:9px;top:564px;width:173px;padding-right:3px;">155445621040349307</div>
<div class="t r" style="left:183px;top:564px;width:71px;padding-right:4px;">100037</div>
<div class="t r" style="left:255px;top:564px;width:92px;padding-right:4px;">3</div>
<div class="t r" style="left:348px;top:564px;width:81px;padding-right:4px;">1</div>
<div class="t r" style="left:430px;top:564px;width:64px;padding-right:4px;">1</div>
<div class="t" style="left:495px;top:564px;width:96px;padding-left:2px;word-spacing:1.3px;">2023-02-23 21:2</div>
<div class="t n" style="left:592px;top:564px;width:81px;padding-left:2px;word-spacing:1.3px;">(Null)</div>
<div class="t n" style="left:674px;top:564px;width:80px;padding-left:2px;word-spacing:1.3px;">(Null)</div>
<div class="t n" style="left:755px;top:564px;width:98px;padding-left:2px;word-spacing:1.3px;">(Null)</div>
<div class="t" style="left:854px;top:564px;width:129px;padding-left:2px;word-spacing:1.3px;">2023-02-23 21:28:24</div>
<div class="t r" style="left:9px;top:586px;width:173px;padding-right:3px;">155445621040349308</div>
<div class="t r" style="left:183px;top:586px;width:71px;padding-right:4px;">100081</div>
<div class="t r" style="left:255px;top:586px;width:92px;padding-right:4px;">3</div>
<div class="t r" style="left:348px;top:586px;width:81px;padding-right:4px;">1</div>
<div class="t r" style="left:430px;top:586px;width:64px;padding-right:4px;">1</div>
<div class="t" style="left:495px;top:586px;width:96px;padding-left:2px;word-spacing:1.3px;">2023-02-23 21:2</div>
<div class="t n" style="left:592px;top:586px;width:81px;padding-left:2px;word-spacing:1.3px;">(Null)</div>
<div class="t n" style="left:674px;top:586px;width:80px;padding-left:2px;word-spacing:1.3px;">(Null)</div>
<div class="t n" style="left:755px;top:586px;width:98px;padding-left:2px;word-spacing:1.3px;">(Null)</div>
<div class="t" style="left:854px;top:586px;width:129px;padding-left:2px;word-spacing:1.3px;">2023-02-23 21:28:24</div>
<div class="t r" style="left:9px;top:608px;width:173px;padding-right:3px;">155445621040349309</div>
<div class="t r" style="left:183px;top:608px;width:71px;padding-right:4px;">100082</div>
<div class="t r" style="left:255px;top:608px;width:92px;padding-right:4px;">3</div>
<div class="t r" style="left:348px;top:608px;width:81px;padding-right:4px;">1</div>
<div class="t r" style="left:430px;top:608px;width:64px;padding-right:4px;">1</div>
<div class="t" style="left:495px;top:608px;width:96px;padding-left:2px;word-spacing:1.3px;">2023-02-23 21:2</div>
<div class="t n" style="left:592px;top:608px;width:81px;padding-left:2px;word-spacing:1.3px;">(Null)</div>
<div class="t n" style="left:674px;top:608px;width:80px;padding-left:2px;word-spacing:1.3px;">(Null)</div>
<div class="t n" style="left:755px;top:608px;width:98px;padding-left:2px;word-spacing:1.3px;">(Null)</div>
<div class="t" style="left:854px;top:608px;width:129px;padding-left:2px;word-spacing:1.3px;">2023-02-23 21:28:24</div>
<div class="t r" style="left:9px;top:630px;width:173px;padding-right:3px;">155445621040349310</div>
<div class="t r" style="left:183px;top:630px;width:71px;padding-right:4px;">100054</div>
<div class="t r" style="left:255px;top:630px;width:92px;padding-right:4px;">3</div>
<div class="t r" style="left:348px;top:630px;width:81px;padding-right:4px;">1</div>
<div class="t r" style="left:430px;top:630px;width:64px;padding-right:4px;">1</div>
<div class="t" style="left:495px;top:630px;width:96px;padding-left:2px;word-spacing:1.3px;">2023-02-23 21:2</div>
<div class="t n" style="left:592px;top:630px;width:81px;padding-left:2px;word-spacing:1.3px;">(Null)</div>
<div class="t n" style="left:674px;top:630px;width:80px;padding-left:2px;word-spacing:1.3px;">(Null)</div>
<div class="t n" style="left:755px;top:630px;width:98px;padding-left:2px;word-spacing:1.3px;">(Null)</div>
<div class="t" style="left:854px;top:630px;width:129px;padding-left:2px;word-spacing:1.3px;">2023-02-23 21:28:24</div>
<div class="t r" style="left:9px;top:652px;width:173px;padding-right:3px;">155445621040349311</div>
<div class="t r" style="left:183px;top:652px;width:71px;padding-right:4px;">100040</div>
<div class="t r" style="left:255px;top:652px;width:92px;padding-right:4px;">3</div>
<div class="t r" style="left:348px;top:652px;width:81px;padding-right:4px;">1</div>
<div class="t r" style="left:430px;top:652px;width:64px;padding-right:4px;">1</div>
<div class="t" style="left:495px;top:652px;width:96px;padding-left:2px;word-spacing:1.3px;">2023-02-23 21:2</div>
<div class="t n" style="left:592px;top:652px;width:81px;padding-left:2px;word-spacing:1.3px;">(Null)</div>
<div class="t n" style="left:674px;top:652px;width:80px;padding-left:2px;word-spacing:1.3px;">(Null)</div>
<div class="t n" style="left:755px;top:652px;width:98px;padding-left:2px;word-spacing:1.3px;">(Null)</div>
<div class="t" style="left:854px;top:652px;width:129px;padding-left:2px;word-spacing:1.3px;">2023-02-23 21:28:24</div>
<div class="t r" style="left:9px;top:674px;width:173px;padding-right:3px;">155445621040349312</div>
<div class="t r" style="left:183px;top:674px;width:71px;padding-right:4px;">100083</div>
<div class="t r" style="left:255px;top:674px;width:92px;padding-right:4px;">3</div>
<div class="t r" style="left:348px;top:674px;width:81px;padding-right:4px;">1</div>
<div class="t r" style="left:430px;top:674px;width:64px;padding-right:4px;">1</div>
<div class="t" style="left:495px;top:674px;width:96px;padding-left:2px;word-spacing:1.3px;">2023-02-23 21:2</div>
<div class="t n" style="left:592px;top:674px;width:81px;padding-left:2px;word-spacing:1.3px;">(Null)</div>
<div class="t n" style="left:674px;top:674px;width:80px;padding-left:2px;word-spacing:1.3px;">(Null)</div>
<div class="t n" style="left:755px;top:674px;width:98px;padding-left:2px;word-spacing:1.3px;">(Null)</div>
<div class="t" style="left:854px;top:674px;width:129px;padding-left:2px;word-spacing:1.3px;">2023-02-23 21:28:24</div>
<div class="t r" style="left:9px;top:696px;width:173px;padding-right:3px;">155445621040349313</div>
<div class="t r" style="left:183px;top:696px;width:71px;padding-right:4px;">100034</div>
<div class="t r" style="left:255px;top:696px;width:92px;padding-right:4px;">3</div>
<div class="t r" style="left:348px;top:696px;width:81px;padding-right:4px;">1</div>
<div class="t r" style="left:430px;top:696px;width:64px;padding-right:4px;">1</div>
<div class="t" style="left:495px;top:696px;width:96px;padding-left:2px;word-spacing:1.3px;">2023-02-23 21:2</div>
<div class="t n" style="left:592px;top:696px;width:81px;padding-left:2px;word-spacing:1.3px;">(Null)</div>
<div class="t n" style="left:674px;top:696px;width:80px;padding-left:2px;word-spacing:1.3px;">(Null)</div>
<div class="t n" style="left:755px;top:696px;width:98px;padding-left:2px;word-spacing:1.3px;">(Null)</div>
<div class="t" style="left:854px;top:696px;width:129px;padding-left:2px;word-spacing:1.3px;">2023-02-23 21:28:24</div>
<div class="t r" style="left:9px;top:718px;width:173px;padding-right:3px;">155445621040349314</div>
<div class="t r" style="left:183px;top:718px;width:71px;padding-right:4px;">100069</div>
<div class="t r" style="left:255px;top:718px;width:92px;padding-right:4px;">3</div>
<div class="t r" style="left:348px;top:718px;width:81px;padding-right:4px;">1</div>
<div class="t r" style="left:430px;top:718px;width:64px;padding-right:4px;">1</div>
<div class="t" style="left:495px;top:718px;width:96px;padding-left:2px;word-spacing:1.3px;">2023-02-23 21:2</div>
<div class="t n" style="left:592px;top:718px;width:81px;padding-left:2px;word-spacing:1.3px;">(Null)</div>
<div class="t n" style="left:674px;top:718px;width:80px;padding-left:2px;word-spacing:1.3px;">(Null)</div>
<div class="t n" style="left:755px;top:718px;width:98px;padding-left:2px;word-spacing:1.3px;">(Null)</div>
<div class="t" style="left:854px;top:718px;width:129px;padding-left:2px;word-spacing:1.3px;">2023-02-23 21:28:24</div>
<div class="t r" style="left:9px;top:740px;width:173px;padding-right:3px;">155445621040349315</div>
<div class="t r" style="left:183px;top:740px;width:71px;padding-right:4px;">100022</div>
<div class="t r" style="left:255px;top:740px;width:92px;padding-right:4px;">3</div>
<div class="t r" style="left:348px;top:740px;width:81px;padding-right:4px;">1</div>
<div class="t r" style="left:430px;top:740px;width:64px;padding-right:4px;">1</div>
<div class="t" style="left:495px;top:740px;width:96px;padding-left:2px;word-spacing:1.3px;">2023-02-23 21:2</div>
<div class="t n" style="left:592px;top:740px;width:81px;padding-left:2px;word-spacing:1.3px;">(Null)</div>
<div class="t n" style="left:674px;top:740px;width:80px;padding-left:2px;word-spacing:1.3px;">(Null)</div>
<div class="t n" style="left:755px;top:740px;width:98px;padding-left:2px;word-spacing:1.3px;">(Null)</div>
<div class="t" style="left:854px;top:740px;width:129px;padding-left:2px;word-spacing:1.3px;">2023-02-23 21:28:24</div>
<div class="t r" style="left:9px;top:762px;width:173px;padding-right:3px;">155445621040349316</div>
<div class="t r" style="left:183px;top:762px;width:71px;padding-right:4px;">100080</div>
<div class="t r" style="left:255px;top:762px;width:92px;padding-right:4px;">3</div>
<div class="t r" style="left:348px;top:762px;width:81px;padding-right:4px;">1</div>
<div class="t r" style="left:430px;top:762px;width:64px;padding-right:4px;">1</div>
<div class="t" style="left:495px;top:762px;width:96px;padding-left:2px;word-spacing:1.3px;">2023-02-23 21:2</div>
<div class="t n" style="left:592px;top:762px;width:81px;padding-left:2px;word-spacing:1.3px;">(Null)</div>
<div class="t n" style="left:674px;top:762px;width:80px;padding-left:2px;word-spacing:1.3px;">(Null)</div>
<div class="t n" style="left:755px;top:762px;width:98px;padding-left:2px;word-spacing:1.3px;">(Null)</div>
<div class="t" style="left:854px;top:762px;width:129px;padding-left:2px;word-spacing:1.3px;">2023-02-23 21:28:24</div>
<div class="t r" style="left:9px;top:784px;width:173px;padding-right:3px;">155445621040349317</div>
<div class="t r" style="left:183px;top:784px;width:71px;padding-right:4px;">100113</div>
<div class="t r" style="left:255px;top:784px;width:92px;padding-right:4px;">3</div>
<div class="t r" style="left:348px;top:784px;width:81px;padding-right:4px;">1</div>
<div class="t r" style="left:430px;top:784px;width:64px;padding-right:4px;">1</div>
<div class="t" style="left:495px;top:784px;width:96px;padding-left:2px;word-spacing:1.3px;">2023-02-23 21:2</div>
<div class="t n" style="left:592px;top:784px;width:81px;padding-left:2px;word-spacing:1.3px;">(Null)</div>
<div class="t n" style="left:674px;top:784px;width:80px;padding-left:2px;word-spacing:1.3px;">(Null)</div>
<div class="t n" style="left:755px;top:784px;width:98px;padding-left:2px;word-spacing:1.3px;">(Null)</div>
<div class="t" style="left:854px;top:784px;width:129px;padding-left:2px;word-spacing:1.3px;">2023-02-23 21:28:24</div>
<div class="t r" style="left:9px;top:806px;width:173px;padding-right:3px;">155445621040349318</div>
<div class="t r" style="left:183px;top:806px;width:71px;padding-right:4px;">100149</div>
<div class="t r" style="left:255px;top:806px;width:92px;padding-right:4px;">3</div>
<div class="t r" style="left:348px;top:806px;width:81px;padding-right:4px;">1</div>
<div class="t r" style="left:430px;top:806px;width:64px;padding-right:4px;">1</div>
<div class="t" style="left:495px;top:806px;width:96px;padding-left:2px;word-spacing:1.3px;">2023-02-23 21:2</div>
<div class="t n" style="left:592px;top:806px;width:81px;padding-left:2px;word-spacing:1.3px;">(Null)</div>
<div class="t n" style="left:674px;top:806px;width:80px;padding-left:2px;word-spacing:1.3px;">(Null)</div>
<div class="t n" style="left:755px;top:806px;width:98px;padding-left:2px;word-spacing:1.3px;">(Null)</div>
<div class="t" style="left:854px;top:806px;width:129px;padding-left:2px;word-spacing:1.3px;">2023-02-23 21:28:24</div>
<div class="t r" style="left:9px;top:828px;width:173px;padding-right:3px;">155445621040349319</div>
<div class="t r" style="left:183px;top:828px;width:71px;padding-right:4px;">100162</div>
<div class="t r" style="left:255px;top:828px;width:92px;padding-right:4px;">3</div>
<div class="t r" style="left:348px;top:828px;width:81px;padding-right:4px;">1</div>
<div class="t r" style="left:430px;top:828px;width:64px;padding-right:4px;">1</div>
<div class="t" style="left:495px;top:828px;width:96px;padding-left:2px;word-spacing:1.3px;">2023-02-23 21:2</div>
<div class="t n" style="left:592px;top:828px;width:81px;padding-left:2px;word-spacing:1.3px;">(Null)</div>
<div class="t n" style="left:674px;top:828px;width:80px;padding-left:2px;word-spacing:1.3px;">(Null)</div>
<div class="t n" style="left:755px;top:828px;width:98px;padding-left:2px;word-spacing:1.3px;">(Null)</div>
<div class="t" style="left:854px;top:828px;width:129px;padding-left:2px;word-spacing:1.3px;">2023-02-23 21:28:24</div>
</body></html>
